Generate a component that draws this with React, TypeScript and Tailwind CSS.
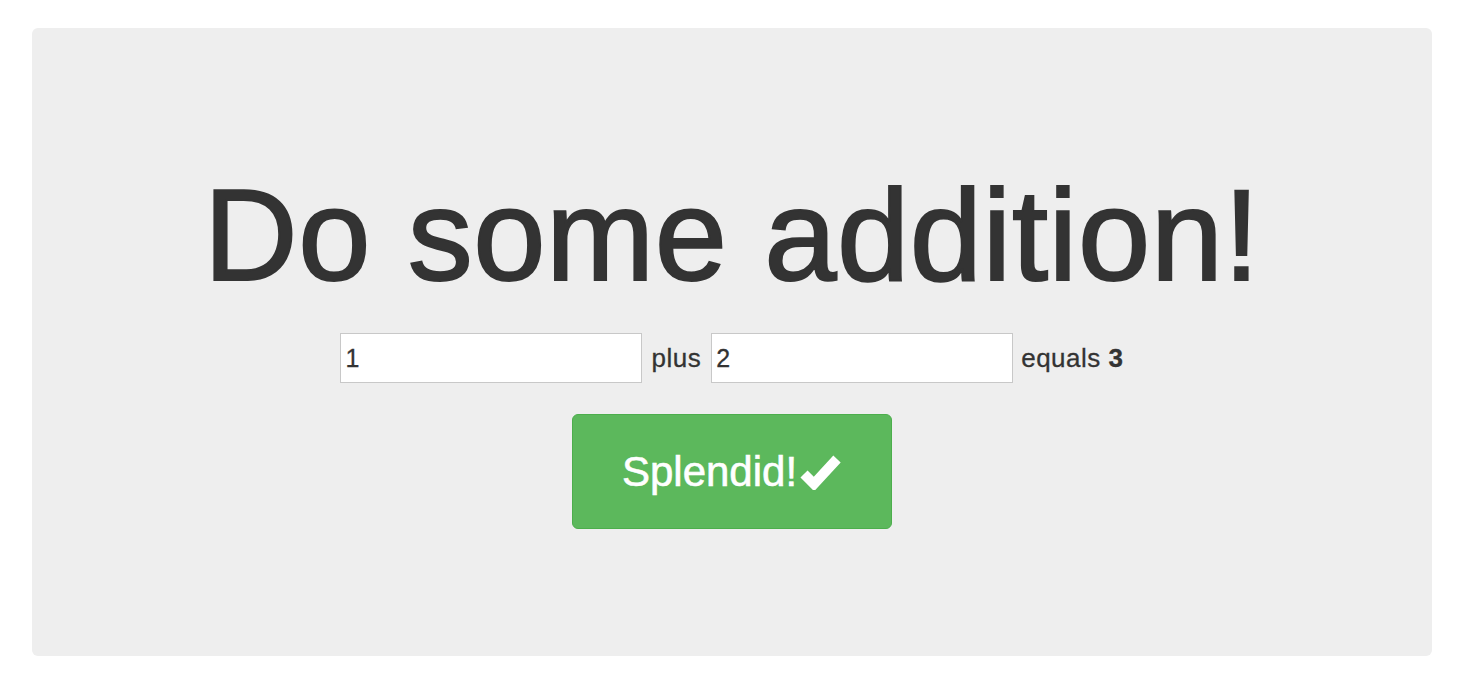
import React, { useState } from 'react';

const CheckIcon: React.FC = () => (
  <svg width="42" height="36" viewBox="0 0 42 36" className="ml-[3px]">
    <polyline points="4,20 14,30 37,5" fill="none" stroke="#fff" strokeWidth="10" strokeLinecap="butt" strokeLinejoin="miter" />
  </svg>
);

const App: React.FC = () => {
  const [a, setA] = useState('1');
  const [b, setB] = useState('2');
  const sum = (Number(a) || 0) + (Number(b) || 0);

  return (
    <div className="min-h-screen bg-white font-['Liberation_Sans',Arial,sans-serif] text-[#333] pt-[28px] pl-[32px]">
      <div className="w-[1400px] h-[628px] bg-[#eee] rounded-[6px] flex flex-col items-center pt-[142px]">
        <h1 className="text-[130px] leading-none font-normal tracking-[0.5px] [-webkit-text-stroke:2px_#333]">Do some addition!</h1>

        <div className="flex items-center mt-[33px] text-[26px] tracking-[0.5px] [-webkit-text-stroke:0.3px_#333]">
          <input
            value={a}
            onChange={(e) => setA(e.target.value)}
            className="w-[302px] h-[50px] bg-white border border-[#c8c8c8] px-[4px] text-[25px] text-[#333] outline-none"
          />
          <span className="ml-[9px]">plus</span>
          <input
            value={b}
            onChange={(e) => setB(e.target.value)}
            className="ml-[10px] w-[302px] h-[50px] bg-white border border-[#c8c8c8] px-[4px] text-[25px] text-[#333] outline-none"
          />
          <span className="ml-[8px]">
            equals <b className="font-bold">{sum}</b>
          </span>
        </div>

        <button className="mt-[31px] w-[320px] h-[115px] bg-[#5cb85c] border border-[#4cae4c] rounded-[6px] flex items-center justify-center text-white text-[42px] [-webkit-text-stroke:0.6px_#fff]">
          Splendid!
          <CheckIcon />
        </button>
      </div>
    </div>
  );
};

export default App;
